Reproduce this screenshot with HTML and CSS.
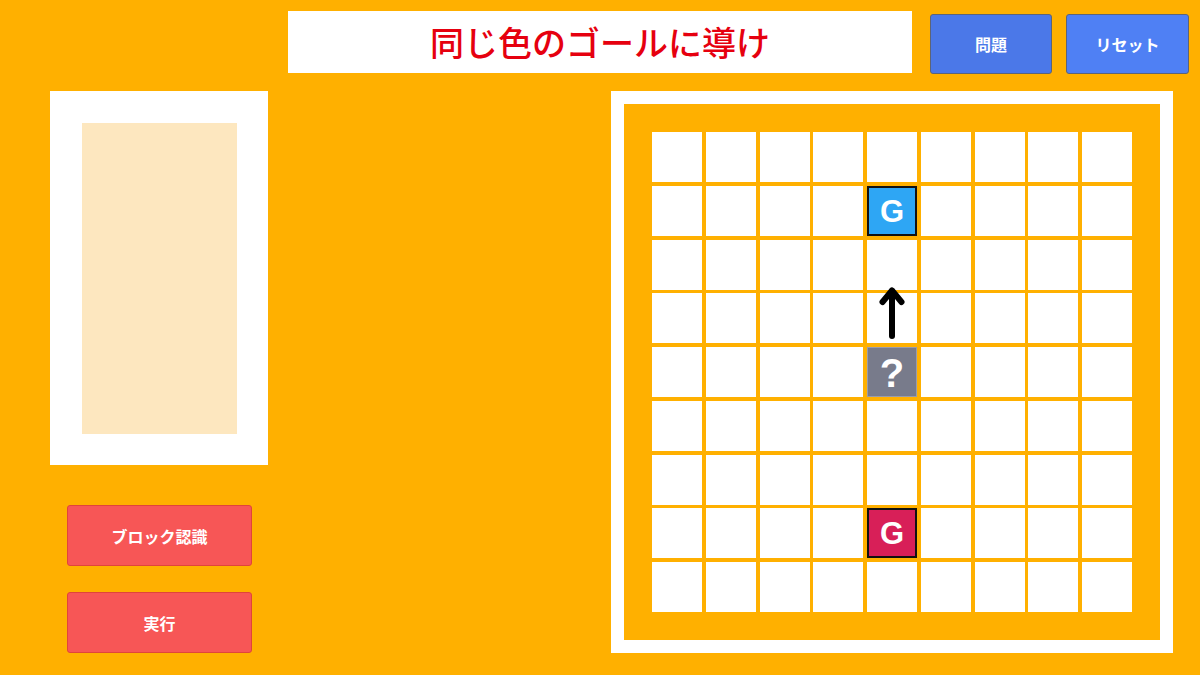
FILE: index.html
```html
<!DOCTYPE html>
<html lang="ja">
<head>
<meta charset="utf-8">
<title>同じ色のゴールに導け</title>
<link rel="stylesheet" href="styles.css">
</head>
<body>
<div class="page">
  <header class="top">
    <div class="title">同じ色のゴールに導け</div>
    <button class="btn blue b1">問題</button>
    <button class="btn blue b2">リセット</button>
  </header>
  <main class="main">
    <section class="left">
      <div class="panel"><div class="panel-inner"></div></div>
      <button class="btn red r1">ブロック認識</button>
      <button class="btn red r2">実行</button>
    </section>
    <section class="board">
      <div class="board-inner">
        <div class="grid" id="grid"></div>
        <svg class="arrow" width="26" height="54" viewBox="0 0 26 54">
          <path d="M13 5 V50" stroke="#000" stroke-width="6" stroke-linecap="round" fill="none"/>
          <path d="M3.5 16 L13 4.5 L22.5 16" stroke="#000" stroke-width="6" stroke-linecap="round" stroke-linejoin="round" fill="none"/>
        </svg>
      </div>
    </section>
  </main>
</div>
<script>
  var g = document.getElementById('grid');
  for (var r = 0; r < 9; r++) {
    for (var c = 0; c < 9; c++) {
      var d = document.createElement('div');
      d.className = 'cell';
      if (c === 4 && r === 1) { d.className += ' goal-blue'; d.textContent = 'G'; }
      if (c === 4 && r === 4) { d.className += ' unknown'; d.textContent = '?'; }
      if (c === 4 && r === 7) { d.className += ' goal-red'; d.textContent = 'G'; }
      g.appendChild(d);
    }
  }
</script>
</body>
</html>
```

FILE: styles.css
```css
html, body {
  margin: 0;
  padding: 0;
  background: #ffb000;
}
body {
  width: 1200px;
  height: 675px;
  overflow: hidden;
  font-family: "Noto Sans CJK JP", "Noto Sans", sans-serif;
}
.top {
  display: flex;
  align-items: flex-start;
  height: 91px;
}
.title {
  margin-left: 288px;
  margin-top: 11px;
  width: 624px;
  height: 62px;
  background: #fff;
  color: #e6000f;
  font-size: 34px;
  line-height: 62px;
  text-align: center;
  font-weight: 500;
}
.btn {
  border: 1px solid #5c6478;
  border-radius: 3px;
  color: #fff;
  font-family: "Noto Sans CJK JP", "Noto Sans", sans-serif;
  font-weight: 700;
  font-size: 16px;
  padding: 0;
  display: block;
}
.blue {
  margin-top: 14px;
  height: 60px;
}
.b1 {
  margin-left: 18px;
  width: 122px;
  background: #4b78e8;
}
.b2 {
  margin-left: 14px;
  width: 123px;
  background: #4f80f4;
}
.main {
  display: flex;
  align-items: flex-start;
  padding-left: 50px;
}
.left {
  width: 218px;
  display: flex;
  flex-direction: column;
}
.panel {
  width: 218px;
  height: 374px;
  box-sizing: border-box;
  background: #fff;
  padding: 32px 31px 31px 32px;
}
.panel-inner {
  width: 155px;
  height: 311px;
  background: #fde7bf;
}
.red {
  width: 185px;
  height: 61px;
  margin-left: 17px;
  background: #f75656;
  border-color: #e0443c;
}
.r1 { margin-top: 40px; }
.r2 { margin-top: 26px; }
.board {
  margin-left: 343px;
  width: 562px;
  height: 562px;
  box-sizing: border-box;
  border: 13px solid #fff;
  background: #ffb000;
}
.board-inner {
  position: relative;
  padding: 28px 29px 29px 28px;
}
.grid {
  display: grid;
  grid-template-columns: repeat(9, 50px);
  grid-template-rows: repeat(9, 50px);
  gap: 3.75px;
}
.cell {
  background: #fff;
  box-sizing: border-box;
  display: flex;
  align-items: center;
  justify-content: center;
  font-family: "Liberation Sans", Arial, sans-serif;
  font-weight: 700;
  font-size: 31px;
  color: #fff;
  padding-top: 2px;
}
.goal-blue {
  background: #2ea6f4;
  border: 2px solid #111;
}
.goal-red {
  background: #d81f58;
  border: 2px solid #111;
}
.unknown {
  background: #787b8b;
  border: 1px solid #9a9caa;
  font-size: 40px;
  padding-top: 3px;
}
.arrow {
  position: absolute;
  left: 255px;
  top: 182px;
}
```
